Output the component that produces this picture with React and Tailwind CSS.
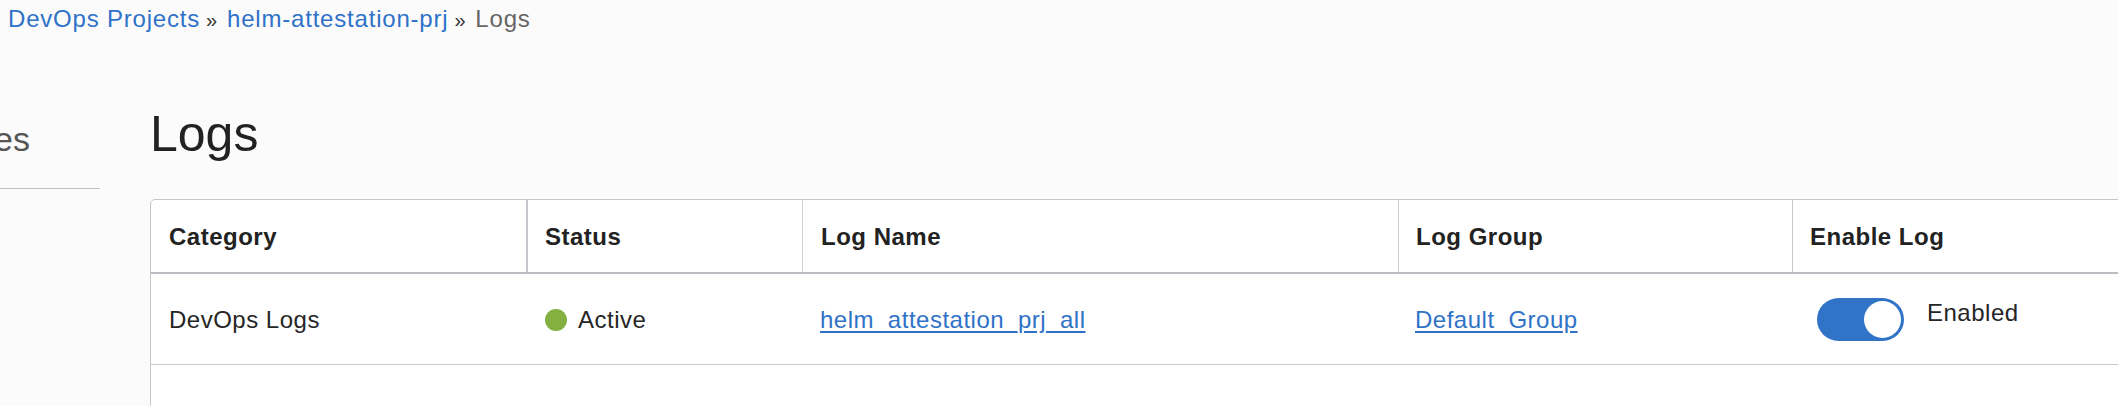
export default function App() {
  return (
    <div className="h-screen w-full overflow-hidden bg-[#fbfbfb] font-['Liberation_Sans',Arial,sans-serif] text-[#222] tracking-[0.5px]">
      <nav className="flex items-baseline whitespace-nowrap pl-[8px] pt-[7px] text-[24px] leading-none tracking-[0.8px]">
        <a className="text-[#2f72c8]">DevOps Projects</a>
        <span className="ml-[6px] mr-[9px] text-[20px] text-[#333]">»</span>
        <a className="text-[#2f72c8]">helm-attestation-prj</a>
        <span className="ml-[6px] mr-[9px] text-[20px] text-[#333]">»</span>
        <span className="text-[#666]">Logs</span>
      </nav>

      <div className="flex">
        <aside className="w-[100px] shrink-0 pt-[91px]">
          <div className="flex justify-end overflow-hidden whitespace-nowrap border-b border-[#bfc3c8] pb-[32px] pr-[70px] text-[34px] leading-none tracking-normal text-[#555]">
            Resources
          </div>
        </aside>

        <main className="ml-[50px] min-w-0 flex-1">
          <h1 className="mt-[78px] text-[50px] leading-none tracking-normal text-[#222]">Logs</h1>

          <div className="mt-[40px] w-max rounded-tl-[5px] border border-[#c4c7cb] bg-white">
            <div className="flex h-[74px] border-b-2 border-[#b9bdc2] text-[24px] font-bold leading-none">
              <div className="flex w-[375px] items-center pl-[18px] pt-[2px]">Category</div>
              <div className="flex w-[276px] items-center border-l-2 border-[#c4c7cb] pl-[17px] pt-[2px]">Status</div>
              <div className="flex w-[596px] items-center border-l border-[#d0d3d6] pl-[18px] pt-[2px]">Log Name</div>
              <div className="flex w-[394px] items-center border-l border-[#d0d3d6] pl-[17px] pt-[2px]">Log Group</div>
              <div className="flex w-[400px] items-center border-l border-[#c4c7cb] pl-[17px] pt-[2px]">Enable Log</div>
            </div>

            <div className="flex h-[91px] border-b border-[#c8cacd] text-[24px] leading-none text-[#262626]">
              <div className="flex w-[375px] items-center pl-[18px] pt-[2px]">DevOps Logs</div>
              <div className="flex w-[276px] items-center gap-[11px] pl-[19px] pt-[2px]">
                <span className="h-[22px] w-[22px] rounded-full bg-[#84b03f]" />
                Active
              </div>
              <div className="flex w-[596px] items-center pl-[18px] pt-[2px]">
                <a className="text-[#2f72c8] underline underline-offset-[3px]">helm_attestation_prj_all</a>
              </div>
              <div className="flex w-[394px] items-center pl-[17px] pt-[2px]">
                <a className="text-[#2f72c8] underline underline-offset-[3px]">Default_Group</a>
              </div>
              <div className="flex w-[400px] items-center pl-[25px]">
                <div className="flex items-start gap-[23px]">
                  <button className="flex h-[43px] w-[87px] items-center justify-end rounded-full bg-[#3073c7] pr-[3px]">
                    <span className="h-[37px] w-[37px] rounded-full bg-white" />
                  </button>
                  <span className="leading-[29px]">Enabled</span>
                </div>
              </div>
            </div>

            <div className="h-[100px]" />
          </div>
        </main>
      </div>
    </div>
  );
}
